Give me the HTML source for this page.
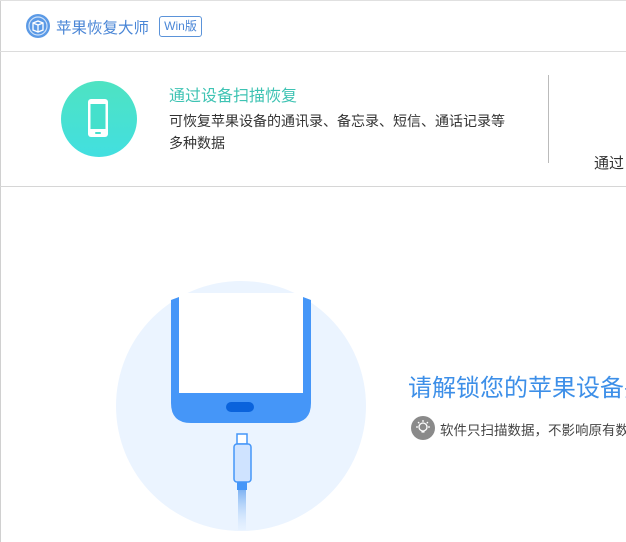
<!DOCTYPE html>
<html><head><meta charset="utf-8"><style>
body{margin:0;width:626px;height:542px;overflow:hidden;background:#fff;font-family:"Liberation Sans","Noto Sans CJK SC",sans-serif;position:relative}
.a{position:absolute;white-space:nowrap}
</style></head><body>
<div class="a" style="left:0;top:0;width:1px;height:542px;background:#d0d0d0"></div>
<div class="a" style="left:0;top:0;width:626px;height:1px;background:#e0e0e0"></div>
<svg class="a" style="left:25px;top:13px" width="26" height="26" viewBox="0 0 26 26"><circle cx="13" cy="13" r="12" fill="#5b9ae6"/><circle cx="13" cy="13" r="9" fill="none" stroke="#fff" stroke-width="1.2" opacity=".7"/><path d="M8 10 L13 8 L18 10 L18 17 L13 19 L8 17 Z M8 10 L13 12 L18 10 M13 12 L13 19" fill="none" stroke="#fff" stroke-width="1.3"/></svg>
<div class="a" style="left:56px;top:16px;font-size:15.5px;color:#4a86d6">苹果恢复大师</div>
<div class="a" style="left:159px;top:16px;width:41px;height:19px;border:1px solid #5b93d9;border-radius:3px;font-size:12px;color:#4a86d6;text-align:center;line-height:19px">Win版</div>
<div class="a" style="left:0;top:51px;width:626px;height:1px;background:#dcdcdc"></div>
<div class="a" style="left:61px;top:81px;width:76px;height:76px;border-radius:50%;background:linear-gradient(#4ee3c2,#42dfe0)"></div>
<svg class="a" style="left:87px;top:98px" width="22" height="40" viewBox="0 0 22 40"><rect x="1" y="1" width="20" height="38" rx="3" fill="#fff"/><rect x="3.5" y="6" width="15" height="25" fill="#45e0cc"/><rect x="8" y="34" width="6" height="2" rx="1" fill="#45e0cc"/></svg>
<div class="a" style="left:169px;top:82px;font-size:16px;color:#3ec3b3">通过设备扫描恢复</div>
<div class="a" style="left:169px;top:110px;font-size:14px;color:#333;line-height:22px">可恢复苹果设备的通讯录、备忘录、短信、通话记录等<br>多种数据</div>
<div class="a" style="left:548px;top:75px;width:1px;height:88px;background:#bbb"></div>
<div class="a" style="left:594px;top:152px;font-size:15px;color:#333">通过</div>
<div class="a" style="left:0;top:186px;width:626px;height:1px;background:#d6d6d6"></div>
<div class="a" style="left:116px;top:281px;width:250px;height:250px;border-radius:50%;background:#ebf4ff"></div>
<svg class="a" style="left:160px;top:290px" width="170" height="252" viewBox="160 290 170 252">
<defs><linearGradient id="g" x1="0" y1="0" x2="0" y2="1"><stop offset="0" stop-color="#7fb3f2"/><stop offset="1" stop-color="#d6e8ff" stop-opacity=".2"/></linearGradient></defs>
<path d="M171 300 L179 297 L179 393 L303 393 L303 297 L311 300 L311 403 Q311 423 291 423 L191 423 Q171 423 171 403 Z" fill="#4596f8"/>
<rect x="179" y="293" width="124" height="100" fill="#fff"/>
<rect x="226" y="402" width="28" height="10" rx="5" fill="#0a63dc"/>
<rect x="237" y="434" width="10" height="10" fill="#fff" stroke="#4596f8" stroke-width="1.5"/>
<rect x="234" y="444" width="17" height="38" rx="3" fill="#cfe3ff" stroke="#4596f8" stroke-width="1.5"/>
<rect x="237" y="482" width="10" height="8" fill="#4596f8"/>
<rect x="238" y="490" width="8" height="40" fill="url(#g)"/>
</svg>
<div class="a" style="left:408px;top:368px;font-size:24px;color:#3d8fe8">请解锁您的苹果设备并</div>
<svg class="a" style="left:410px;top:415px" width="26" height="26" viewBox="0 0 26 26"><circle cx="13" cy="13" r="12" fill="#8a8a8a"/><circle cx="13" cy="12" r="4" fill="none" stroke="#fff" stroke-width="1.3"/><path d="M11.5 17h3M13 5v2M6 12h2M18 12h2M8 7l1.3 1.3M18 7l-1.3 1.3" stroke="#fff" stroke-width="1.2"/></svg>
<div class="a" style="left:440px;top:419px;font-size:13.5px;color:#444">软件只扫描数据，不影响原有数据</div>
</body></html>
